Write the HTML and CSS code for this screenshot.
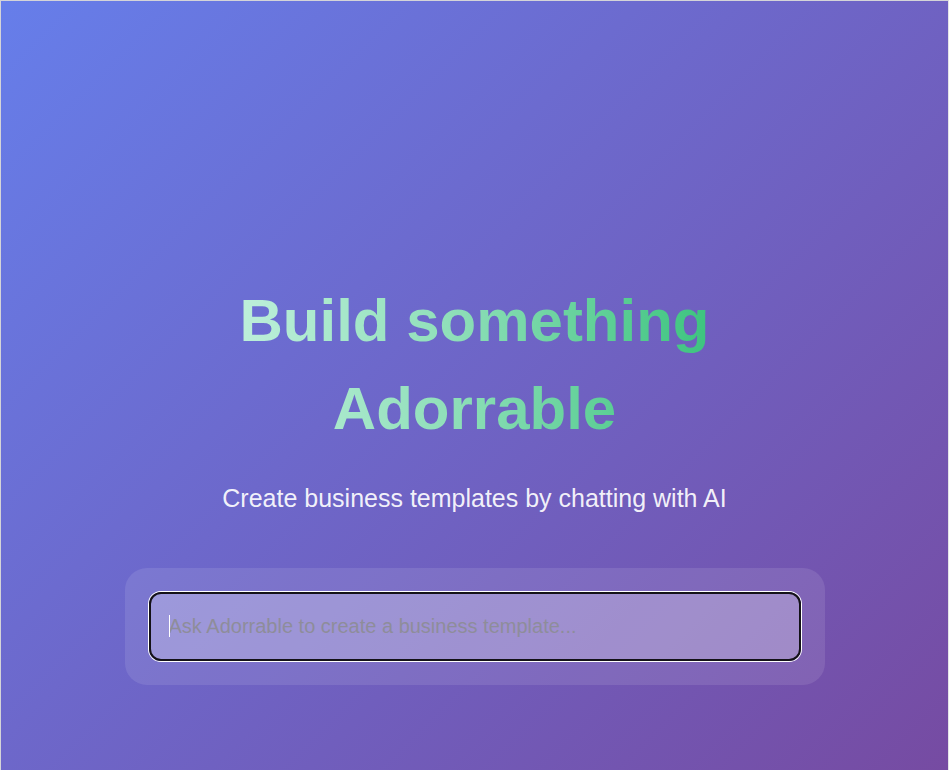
FILE: index.html
```html
<!DOCTYPE html>
<html lang="en">
<head>
<meta charset="utf-8">
<title>Adorrable</title>
<link rel="stylesheet" href="styles.css">
</head>
<body>
<div class="frame">
  <main class="hero">
    <h1 class="title"><span class="title-text">Build something<br>Adorrable</span></h1>
    <p class="subtitle">Create business templates by chatting with AI</p>
    <div class="card">
      <div class="field">
        <input class="prompt" type="text" placeholder="Ask Adorrable to create a business template...">
        <span class="caret"></span>
      </div>
    </div>
  </main>
</div>
</body>
</html>
```

FILE: styles.css
```css
html, body {
  margin: 0;
  padding: 0;
  background: #ffffff;
}

body {
  font-family: "Liberation Sans", Arial, sans-serif;
  width: 952px;
  height: 770px;
  overflow: hidden;
}

.frame {
  box-sizing: border-box;
  width: 949px;
  height: 770px;
  border-top: 1px solid #d4d4d8;
  border-left: 1px solid #d4d4d8;
  border-right: 1px solid #e4e4e8;
  background: linear-gradient(135deg, #667eea 0%, #764ba2 100%);
}

.hero {
  display: flex;
  flex-direction: column;
  align-items: center;
  padding-top: 276px;
}

.title {
  margin: 0;
  text-align: center;
  font-size: 60px;
  line-height: 88px;
  font-weight: 700;
}

.title-text {
  display: inline-block;
  background: linear-gradient(90deg, #bdefda 0%, #8fdfb9 45%, #3dc47f 100%);
  -webkit-background-clip: text;
  background-clip: text;
  color: transparent;
}

.subtitle {
  margin: 31px 0 0;
  font-size: 25px;
  line-height: 29px;
  color: rgba(255, 255, 255, 0.92);
}

.card {
  box-sizing: border-box;
  margin-top: 55px;
  width: 700px;
  padding: 24px;
  border-radius: 22px;
  background: rgba(255, 255, 255, 0.1);
}

.field {
  position: relative;
}

.prompt {
  box-sizing: border-box;
  display: block;
  width: 100%;
  height: 69px;
  padding: 0 18px;
  border: 2px solid #141218;
  border-radius: 12px;
  box-shadow: 0 0 0 1px #ffffff;
  background: rgba(255, 255, 255, 0.25);
  font-family: "Liberation Sans", Arial, sans-serif;
  font-size: 20px;
  color: #ffffff;
  caret-color: transparent;
  outline: none;
}

.prompt::placeholder {
  color: #8e8d9a;
  opacity: 1;
}

.caret {
  position: absolute;
  left: 20px;
  top: 23px;
  width: 1px;
  height: 22px;
  background: #ffffff;
}
```
